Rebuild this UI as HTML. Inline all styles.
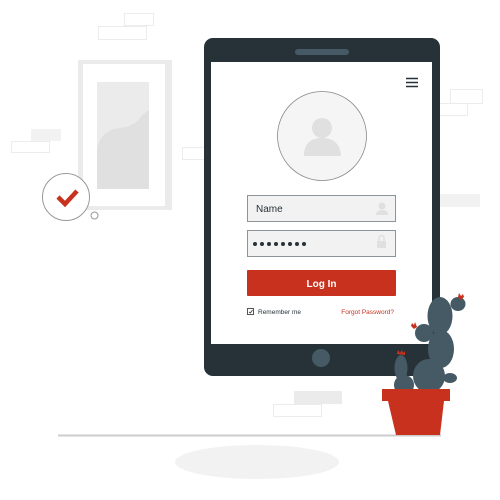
<!DOCTYPE html>
<html><head><style>html,body{margin:0;padding:0;background:#fff;width:500px;height:500px;overflow:hidden}</style></head>
<body>
<svg width="500" height="500" viewBox="0 0 500 500" xmlns="http://www.w3.org/2000/svg" font-family="Liberation Sans, sans-serif">
<g fill="none" stroke="#ececec" stroke-width="1">
<rect x="124.5" y="13.5" width="29" height="12"/>
<rect x="98.5" y="26.5" width="48" height="13"/>
<rect x="11.5" y="141.5" width="38" height="11"/>
<rect x="182.5" y="147.5" width="22" height="12"/>
<rect x="450.5" y="89.5" width="32" height="14"/>
<rect x="437.5" y="103.5" width="30" height="12"/>
<rect x="273.5" y="404.5" width="48" height="12"/>
</g>
<rect x="31" y="129" width="30" height="12" fill="#f2f2f2"/>
<rect x="440" y="194" width="40" height="13" fill="#f2f2f2"/>
<rect x="294" y="391" width="48" height="13" fill="#ebebeb"/>
<rect x="78" y="60" width="94" height="150" fill="#ebebeb"/>
<rect x="83" y="64" width="82" height="142" fill="#fff"/>
<rect x="97" y="82" width="52" height="107" fill="#ebebeb"/>
<path d="M97 150 Q100 130 120 128 Q135 126 140 118 Q145 112 149 110 L149 189 L97 189Z" fill="#e0e0e0"/>
<circle cx="66" cy="197" r="23.5" fill="#fff" stroke="#999" stroke-width="1"/>
<path d="M58 197 L65 204 L77 191" fill="none" stroke="#c9311f" stroke-width="4.5"/>
<circle cx="94.5" cy="215.5" r="3.5" fill="#fff" stroke="#999"/>
<line x1="58" y1="435.5" x2="441" y2="435.5" stroke="#ccc" stroke-width="2"/>
<ellipse cx="257" cy="462" rx="82" ry="17" fill="#f2f2f2"/>
<rect x="204" y="38" width="236" height="338" rx="9" fill="#263238"/>
<rect x="211" y="62" width="221" height="282" fill="#fff"/>
<rect x="295" y="49" width="54" height="6" rx="3" fill="#455a64"/>
<circle cx="321" cy="358" r="9" fill="#455a64"/>
<g stroke="#263238" stroke-width="1.5"><line x1="406" y1="78.5" x2="418" y2="78.5"/><line x1="406" y1="82.5" x2="418" y2="82.5"/><line x1="406" y1="86.5" x2="418" y2="86.5"/></g>
<circle cx="322" cy="136" r="44.5" fill="#f5f5f5" stroke="#888" stroke-width="0.8"/>
<circle cx="322" cy="128" r="10" fill="#e0e0e0"/>
<path d="M304 156 Q304 138 322 138 Q340 138 341 156Z" fill="#e0e0e0"/>
<rect x="247.5" y="195.5" width="148" height="26" fill="#f2f2f2" stroke="#8a9499"/>
<text x="256" y="212" font-size="10" fill="#263238">Name</text>
<circle cx="382" cy="206" r="3.5" fill="#e0e0e0"/><path d="M376 215 Q376 210 382 210 Q388 210 388 215Z" fill="#e0e0e0"/>
<rect x="247.5" y="230.5" width="148" height="26" fill="#f2f2f2" stroke="#8a9499"/>
<g fill="#263238"><circle cx="255" cy="244" r="2"/><circle cx="262" cy="244" r="2"/><circle cx="269" cy="244" r="2"/><circle cx="276" cy="244" r="2"/><circle cx="283" cy="244" r="2"/><circle cx="290" cy="244" r="2"/><circle cx="297" cy="244" r="2"/><circle cx="304" cy="244" r="2"/></g>
<rect x="377" y="241" width="9" height="7" fill="#e0e0e0"/><path d="M379 241 V238 A2.5 2.5 0 0 1 384 238 V241" fill="none" stroke="#e0e0e0" stroke-width="1.5"/>
<rect x="247" y="270" width="149" height="26" rx="1" fill="#c9311f"/>
<text x="321.5" y="287" font-size="10" font-weight="bold" fill="#fff" text-anchor="middle">Log In</text>
<rect x="247.5" y="308.5" width="6" height="6" fill="#fff" stroke="#555"/>
<path d="M249 312 L250.5 313 L252.5 310" fill="none" stroke="#263238" stroke-width="0.8"/>
<text x="258" y="314" font-size="6.5" fill="#263238">Remember me</text>
<text x="394" y="314" font-size="6.5" fill="#c9311f" text-anchor="end">Forgot Password?</text>
<g fill="#455a64">
<ellipse cx="458" cy="304" rx="7.5" ry="7"/>
<ellipse cx="440" cy="316" rx="12.5" ry="19"/>
<ellipse cx="424" cy="333" rx="9" ry="9"/>
<ellipse cx="441" cy="349" rx="13" ry="19"/>
<ellipse cx="450" cy="378" rx="7" ry="5"/>
<ellipse cx="401" cy="368" rx="6.5" ry="13"/>
<ellipse cx="404" cy="385" rx="10" ry="10"/>
<ellipse cx="429" cy="376" rx="16" ry="17"/>
</g>
<g fill="#c9311f">
<path d="M458 297 l1-4 l2 3 l2-2 l1 3 l-3 3z"/><path d="M411 326 l1-3 l2 2 l1-3 l2 5 l-3 2z"/><path d="M397 354 l1-4 l2 3 l2-3 l1 3 l2-2 v4 z"/>
<rect x="382" y="389" width="68" height="12"/>
<path d="M388 401 L444 401 L440 435 L396 435Z"/>
</g>
</svg>
</body></html>
